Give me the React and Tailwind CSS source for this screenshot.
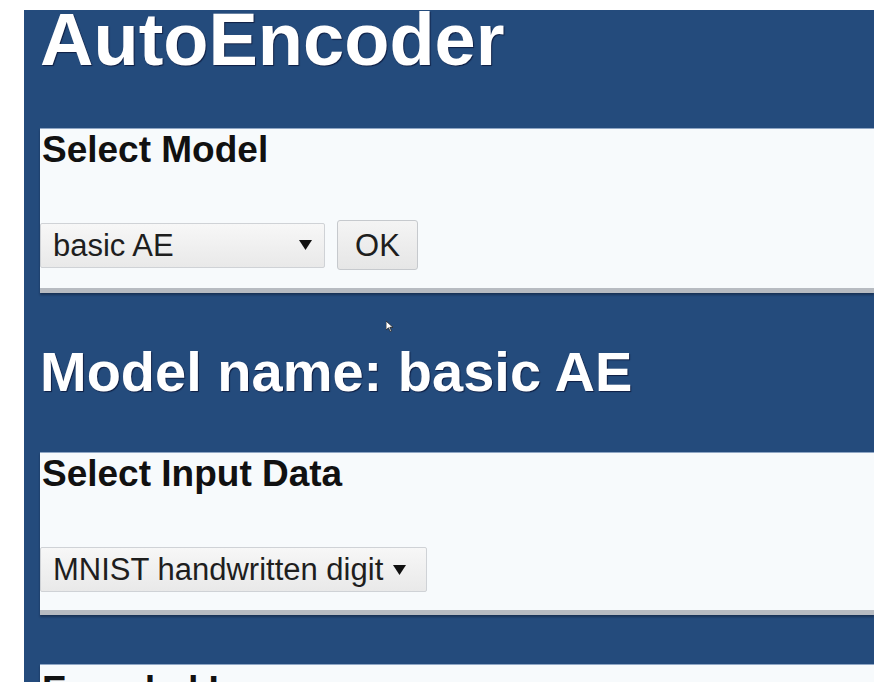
import React from "react";

const SelectBox = ({ label, width, spread = true }) => (
  <div
    className={`h-[45px] flex items-center pl-[12px] pr-[12px] border border-[#cfd2d6] rounded-[2px] bg-gradient-to-b from-[#f7f7f7] to-[#e9e9e9] text-[31px] leading-none text-[#1e1e1e] ${
      spread ? "justify-between" : "justify-start"
    }`}
    style={{ width }}
  >
    <span>{label}</span>
    <svg width="13" height="10" viewBox="0 0 13 10" className="ml-[10px] shrink-0">
      <polygon points="0,0 13,0 6.5,10" fill="#111" />
    </svg>
  </div>
);

const Card = ({ title, children, className = "" }) => (
  <div
    className={`bg-[#f7fafc] border-t border-t-[#8fa6c4] border-b-[5px] border-b-[#b7bbc1] shadow-[0_2px_2px_rgba(10,20,40,0.45)] pt-[2px] pl-[2px] ${className}`}
  >
    <h2 className="text-[37px] leading-none font-bold text-[#111]">{title}</h2>
    {children}
  </div>
);

export default function App() {
  return (
    <div className="relative h-[682px] overflow-hidden bg-white pt-[10px] pl-[24px] font-['Liberation_Sans',Arial,sans-serif]">
      <div className="h-[672px] bg-[#244b7c] pl-[16px] flex flex-col">
        <h1 className="pt-[2px] text-[74px] leading-[56px] font-bold text-white [text-shadow:1px_1px_1px_rgba(0,0,30,0.6)]">
          AutoEncoder
        </h1>

        <Card title="Select Model" className="mt-[60px]">
          <div className="mt-[52px] mb-[18px] h-[50px] flex items-center ml-[-2px]">
            <SelectBox label="basic AE" width={285} />
            <button className="ml-[12px] h-[50px] w-[81px] border border-[#c6c9cd] rounded-[3px] bg-gradient-to-b from-[#f4f4f4] to-[#e6e6e6] text-[31px] leading-none text-[#1e1e1e]">
              OK
            </button>
          </div>
        </Card>

        <h1 className="mt-[51px] text-[56px] leading-[56px] font-bold text-white [text-shadow:1px_1px_1px_rgba(0,0,30,0.6)]">
          Model name: basic AE
        </h1>

        <Card title="Select Input Data" className="mt-[52px]">
          <div className="mt-[55px] mb-[18px] flex ml-[-2px]">
            <SelectBox label="MNIST handwritten digit" width={387} spread={false} />
          </div>
        </Card>

        <Card title="Encoded Layers" className="mt-[49px] pt-[6px]">
          <div className="h-[120px]" />
        </Card>
      </div>

      {/* mouse pointer */}
      <svg
        className="absolute left-[386px] top-[321px]"
        width="8"
        height="11"
        viewBox="0 0 8 11"
      >
        <polygon points="0,0 0,9 2.5,6.8 4.2,10.5 5.5,10 3.8,6.3 7,6.3" fill="#fff" stroke="#222" strokeWidth="0.8" />
      </svg>
    </div>
  );
}
